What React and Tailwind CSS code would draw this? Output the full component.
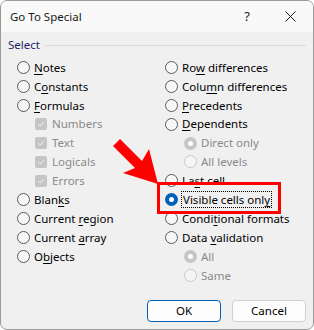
import React from "react";

const U = ({ children }) => <span className="underline underline-offset-2">{children}</span>;

function Radio({ checked, disabled }) {
  if (checked && !disabled) {
    return (
      <span className="w-[13px] h-[13px] rounded-full bg-[#005fb8] flex items-center justify-center shrink-0">
        <span className="w-[5px] h-[5px] rounded-full bg-white" />
      </span>
    );
  }
  if (checked && disabled) {
    return (
      <span className="w-[13px] h-[13px] rounded-full bg-[#c5c5c5] flex items-center justify-center shrink-0">
        <span className="w-[5px] h-[5px] rounded-full bg-white" />
      </span>
    );
  }
  if (disabled) {
    return <span className="w-[13px] h-[13px] rounded-full border border-[#c8c8c8] bg-[#f5f5f5] shrink-0" />;
  }
  return <span className="w-[13px] h-[13px] rounded-full border border-[#5a5a5a] bg-[#f7f7f7] shrink-0" />;
}

function Check() {
  return (
    <span className="w-[12px] h-[12px] rounded-[2px] bg-[#c5c5c5] flex items-center justify-center shrink-0">
      <svg width="8" height="8" viewBox="0 0 8 8">
        <path d="M1.2 4.2 L3.2 6 L6.8 2" stroke="#f3f3f3" strokeWidth="1" fill="none" />
      </svg>
    </span>
  );
}

function Row({ children, className = "" }) {
  return <div className={"h-[18.9px] flex items-center " + className}>{children}</div>;
}

export default function App() {
  return (
    <div
      className="relative w-[314px] h-[330px] bg-[#f0f0f0] border border-[#9a9a9a] rounded-[7px] overflow-hidden text-[11.5px] text-black"
      style={{ fontFamily: '"Noto Sans", "Segoe UI", sans-serif' }}
    >
      {/* Title bar */}
      <div className="h-[31px] bg-[#f9f9f9] flex items-center pl-[9px]">
        <span className="text-[11.5px] text-[#1a1a1a]">Go To Special</span>
        <span className="ml-auto text-[13px] mr-[35px] text-[#1a1a1a]">?</span>
        <svg width="11" height="11" viewBox="0 0 11 11" className="mr-[17px]">
          <path d="M0.5 0.5 L10.5 10.5 M10.5 0.5 L0.5 10.5" stroke="#1a1a1a" strokeWidth="1" />
        </svg>
      </div>

      {/* Group header */}
      <div className="flex items-center h-[26px] pl-[7px] pr-[7px]">
        <span className="text-[#1f1f66]">Select</span>
        <div className="flex-1 h-px bg-[#dcdcdc] ml-[5px]" />
      </div>

      <div className="grid grid-cols-[148px_1fr] pl-[16px]">
        {/* Left column */}
        <div className="flex flex-col">
          <Row className="gap-[4px]"><Radio /><span><U>N</U>otes</span></Row>
          <Row className="gap-[4px]"><Radio /><span>C<U>o</U>nstants</span></Row>
          <Row className="gap-[4px]"><Radio /><span><U>F</U>ormulas</span></Row>
          <Row className="gap-[5px] pl-[18px] text-[#8a8a8a]"><Check /><span>Numbers</span></Row>
          <Row className="gap-[5px] pl-[18px] text-[#8a8a8a]"><Check /><span>Text</span></Row>
          <Row className="gap-[5px] pl-[18px] text-[#8a8a8a]"><Check /><span>Logicals</span></Row>
          <Row className="gap-[5px] pl-[18px] text-[#8a8a8a]"><Check /><span>Errors</span></Row>
          <Row className="gap-[4px]"><Radio /><span>Blan<U>k</U>s</span></Row>
          <Row className="gap-[4px]"><Radio /><span>Current <U>r</U>egion</span></Row>
          <Row className="gap-[4px]"><Radio /><span>Current <U>a</U>rray</span></Row>
          <Row className="gap-[4px]"><Radio /><span>O<U>b</U>jects</span></Row>
        </div>
        {/* Right column */}
        <div className="flex flex-col">
          <Row className="gap-[4px]"><Radio /><span>Ro<U>w</U> differences</span></Row>
          <Row className="gap-[4px]"><Radio /><span>Colu<U>m</U>n differences</span></Row>
          <Row className="gap-[4px]"><Radio /><span><U>P</U>recedents</span></Row>
          <Row className="gap-[4px]"><Radio /><span><U>D</U>ependents</span></Row>
          <Row className="gap-[4px] pl-[19px] text-[#8a8a8a]"><Radio checked disabled /><span>Direct only</span></Row>
          <Row className="gap-[4px] pl-[19px] text-[#8a8a8a]"><Radio disabled /><span>All levels</span></Row>
          <Row className="gap-[4px]"><Radio /><span>La<U>s</U>t cell</span></Row>
          <Row className="gap-[3px]">
            <Radio checked />
            <span className="border border-dotted border-black px-[1px] leading-[15px]">Visible cells onl<U>y</U></span>
          </Row>
          <Row className="gap-[4px]"><Radio /><span>Condi<U>t</U>ional formats</span></Row>
          <Row className="gap-[4px]"><Radio /><span>Data <U>v</U>alidation</span></Row>
          <Row className="gap-[4px] pl-[19px] text-[#8a8a8a]"><Radio checked disabled /><span>All</span></Row>
          <Row className="gap-[4px] pl-[19px] text-[#8a8a8a]"><Radio disabled /><span>Same</span></Row>
        </div>
      </div>

      {/* Buttons */}
      <div className="absolute right-[7px] bottom-[7px] flex gap-[11px]">
        <button className="w-[74px] h-[22px] rounded-[4px] border border-[#005fb8] bg-[#fdfdfd] text-[11.5px]">OK</button>
        <button className="w-[74px] h-[22px] rounded-[4px] border border-[#d0d0d0] bg-[#fdfdfd] text-[11.5px]">Cancel</button>
      </div>

      {/* Annotation: red box */}
      <div className="absolute left-[156px] top-[181px] w-[124px] h-[32px] border-[3px] border-[#ff0000]" />

      {/* Annotation: arrow */}
      <svg className="absolute left-0 top-0" width="314" height="330" viewBox="0 0 314 330">
        <polygon points="112,145 119,138 141,160 148,148 157,183 122,172 134,167" fill="#ff0000" />
      </svg>
    </div>
  );
}
